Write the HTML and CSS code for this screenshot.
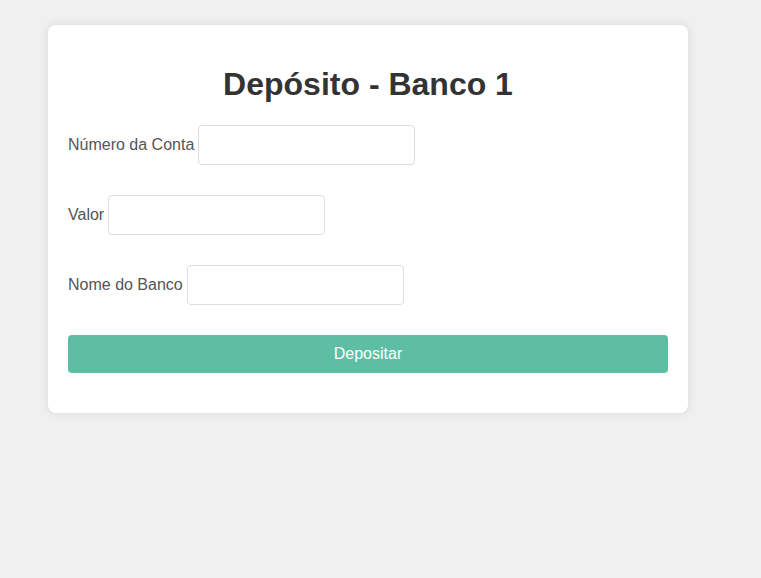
FILE: index.html
```html
<!DOCTYPE html>
<html lang="pt">
<head>
<meta charset="utf-8">
<title>Depósito - Banco 1</title>
<link rel="stylesheet" href="styles.css">
</head>
<body>
<div class="card">
  <h1 class="title">Depósito - Banco 1</h1>
  <form class="form">
    <div class="row">
      <label class="label" for="conta">Número da Conta</label>
      <input class="input" id="conta" type="text">
    </div>
    <div class="row">
      <label class="label" for="valor">Valor</label>
      <input class="input" id="valor" type="text">
    </div>
    <div class="row">
      <label class="label" for="banco">Nome do Banco</label>
      <input class="input" id="banco" type="text">
    </div>
    <button class="button" type="button">Depositar</button>
  </form>
</div>
</body>
</html>
```

FILE: styles.css
```css
html, body {
  margin: 0;
  padding: 0;
}
body {
  background: #f0f0f0;
  font-family: "Liberation Sans", Arial, sans-serif;
  min-height: 578px;
  padding: 25px 0 0 48px;
  box-sizing: border-box;
}
.card {
  width: 640px;
  box-sizing: border-box;
  background: #fff;
  border-radius: 8px;
  box-shadow: 0 0 10px rgba(0, 0, 0, 0.1);
  padding: 20px 20px 40px;
}
.title {
  margin: 21px 0 22px;
  font-size: 32px;
  line-height: 37px;
  font-weight: bold;
  text-align: center;
  color: #333;
}
.form {
  display: flex;
  flex-direction: column;
  gap: 30px;
}
.row {
  display: flex;
  align-items: center;
  gap: 4px;
}
.label {
  font-size: 16px;
  color: #555;
}
.input {
  width: 217px;
  height: 40px;
  box-sizing: border-box;
  border: 1px solid #ddd;
  border-radius: 4px;
  padding: 10px;
  font-size: 16px;
  font-family: inherit;
  background: #fff;
}
.button {
  height: 38px;
  width: 100%;
  border: none;
  border-radius: 4px;
  background: #5ebea3;
  color: #fff;
  font-size: 16px;
  font-family: inherit;
}
```
